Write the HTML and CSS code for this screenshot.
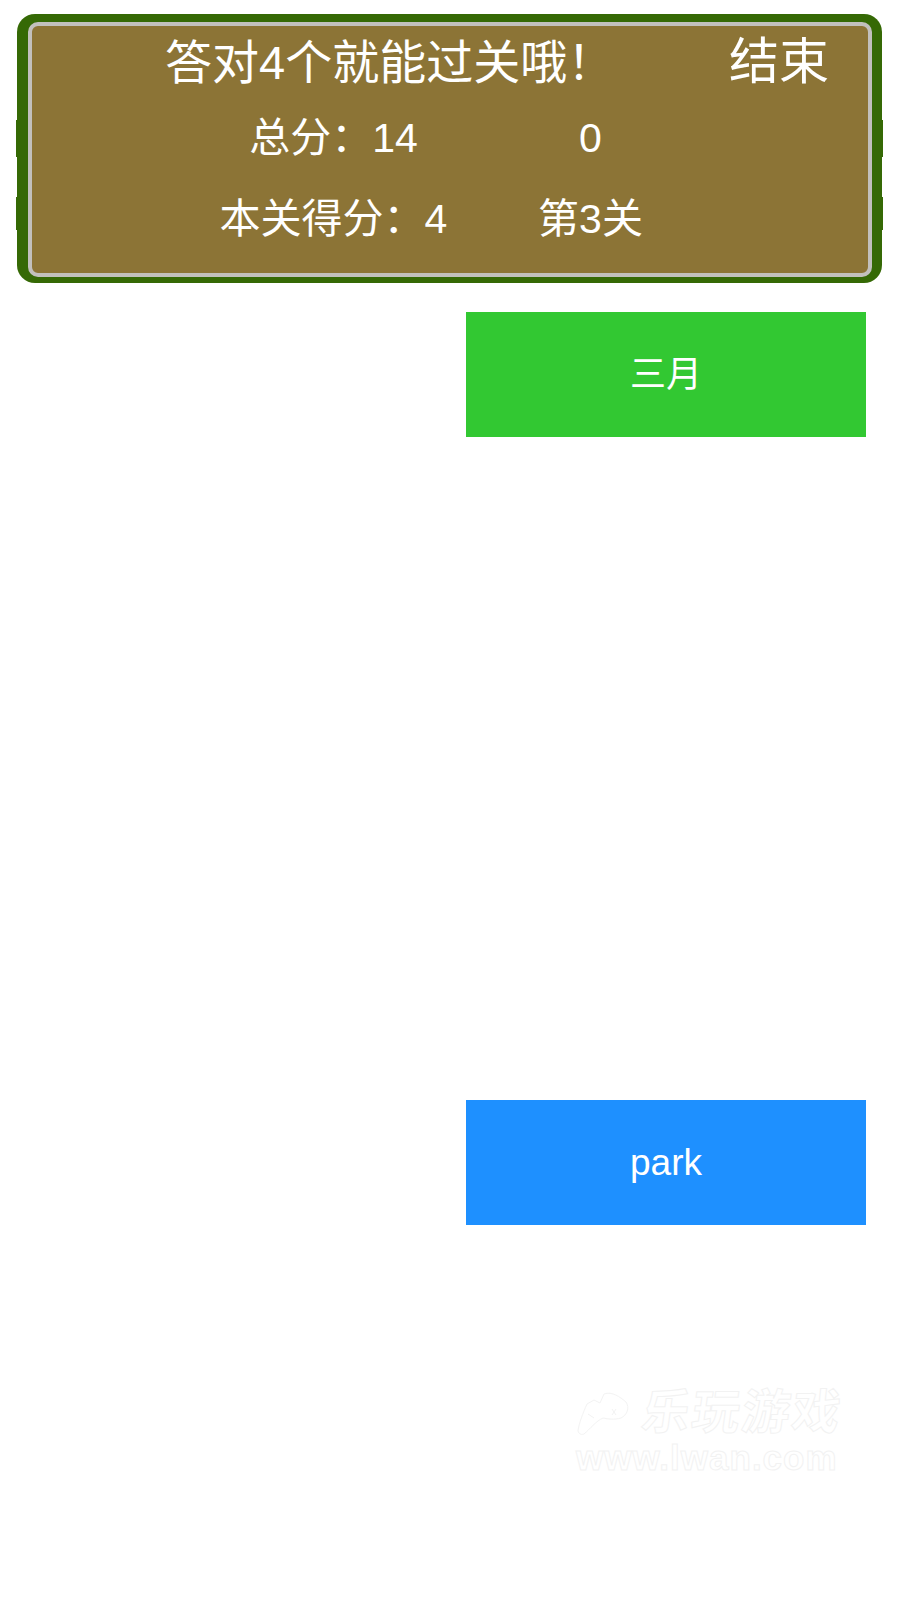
FILE: index.html
```html
<!DOCTYPE html>
<html lang="zh-CN">
<head>
<meta charset="utf-8">
<title>答对4个就能过关哦</title>
<link rel="stylesheet" href="styles.css">
</head>
<body>
<div class="page">
  <div class="board">
    <div class="board-inner">
      <div class="row-top">
        <span class="tip">答对4个就能过关哦！</span>
        <span class="end">结束</span>
      </div>
      <div class="row-score">
        <span>总分：14</span>
        <span>0</span>
      </div>
      <div class="row-score">
        <span>本关得分：4</span>
        <span>第3关</span>
      </div>
    </div>
  </div>
  <div class="answers">
    <div class="answer green">三月</div>
    <div class="answer blue">park</div>
  </div>
  <div class="watermark">
    <div class="mark-top">
      <svg class="mark-logo" width="54" height="44" viewBox="0 0 54 44">
        <path d="M2 40 C3 32 7 22 11 13 L18 9 L24 12 L28 3 C36 0 44 6 50 11 C54 17 51 24 45 27 C38 29 32 28 27 27 C20 30 14 38 8 43 C5 44 3 43 2 40 Z"/>
        <path d="M12 23 L18 27 M36 18 L40 24 M40 18 L36 24"/>
      </svg>
      <span class="mark-name">乐玩游戏</span>
    </div>
    <div class="mark-url">www.lwan.com</div>
  </div>
</div>
</body>
</html>
```
FILE: styles.css
```css
html, body {
  margin: 0;
  background: #fff;
}
.page {
  position: relative;
  height: 1600px;
  font-family: "Liberation Sans", "Noto Sans CJK SC", sans-serif;
  line-height: 1;
  color: #fff;
}
.board {
  position: relative;
  z-index: 0;
  top: 14px;
  margin-left: 17px;
  width: 865px;
  height: 269px;
  box-sizing: border-box;
  background: #356905;
  border-radius: 18px;
  padding: 8px 10px 6px 11px;
}
/* the stretched frame bulges a little on both sides */
.board::before, .board::after {
  content: "";
  position: absolute;
  z-index: -1;
  left: -1px;
  right: -1px;
  background: #356905;
}
.board::before {
  top: 106px;
  height: 37px;
}
.board::after {
  top: 183px;
  height: 33px;
}
.board-inner {
  height: 100%;
  box-sizing: border-box;
  background: #8c7436;
  border: 4px solid #c2c0bd;
  border-radius: 10px;
}
.row-top {
  display: flex;
  height: 72px;
  align-items: center;
  padding-left: 133px;
}
.tip {
  width: 564px;
  font-size: 47px;
}
.end {
  font-size: 50px;
}
.row-score {
  display: grid;
  grid-template-columns: 257px 257px;
  padding-left: 173px;
  height: 81px;
  align-items: center;
  text-align: center;
  font-size: 41px;
}
.answers {
  margin-top: 43px;
  margin-left: 466px;
  width: 400px;
  display: flex;
  flex-direction: column;
  gap: 663px;
}
.answer {
  height: 125px;
  display: flex;
  align-items: center;
  justify-content: center;
  font-size: 37px;
}
.green {
  background: #32c832;
  font-size: 36px;
}
.blue {
  background: #1e90ff;
}
.watermark {
  position: absolute;
  left: 576px;
  top: 1389px;
  width: 270px;
  color: #fff;
}
.mark-top {
  display: flex;
  align-items: center;
  gap: 12px;
  height: 48px;
}
.mark-logo {
  fill: #fff;
  stroke: #f3f3f3;
  stroke-width: 1;
}
.mark-name {
  font-size: 48px;
  font-weight: bold;
  letter-spacing: 2px;
  transform: skewX(-8deg);
  -webkit-text-stroke: 1px #f2f2f2;
  white-space: nowrap;
}
.mark-url {
  margin-top: 3px;
  font-size: 35px;
  letter-spacing: 1px;
  font-weight: bold;
  -webkit-text-stroke: 1px #f2f2f2;
  white-space: nowrap;
}
```
